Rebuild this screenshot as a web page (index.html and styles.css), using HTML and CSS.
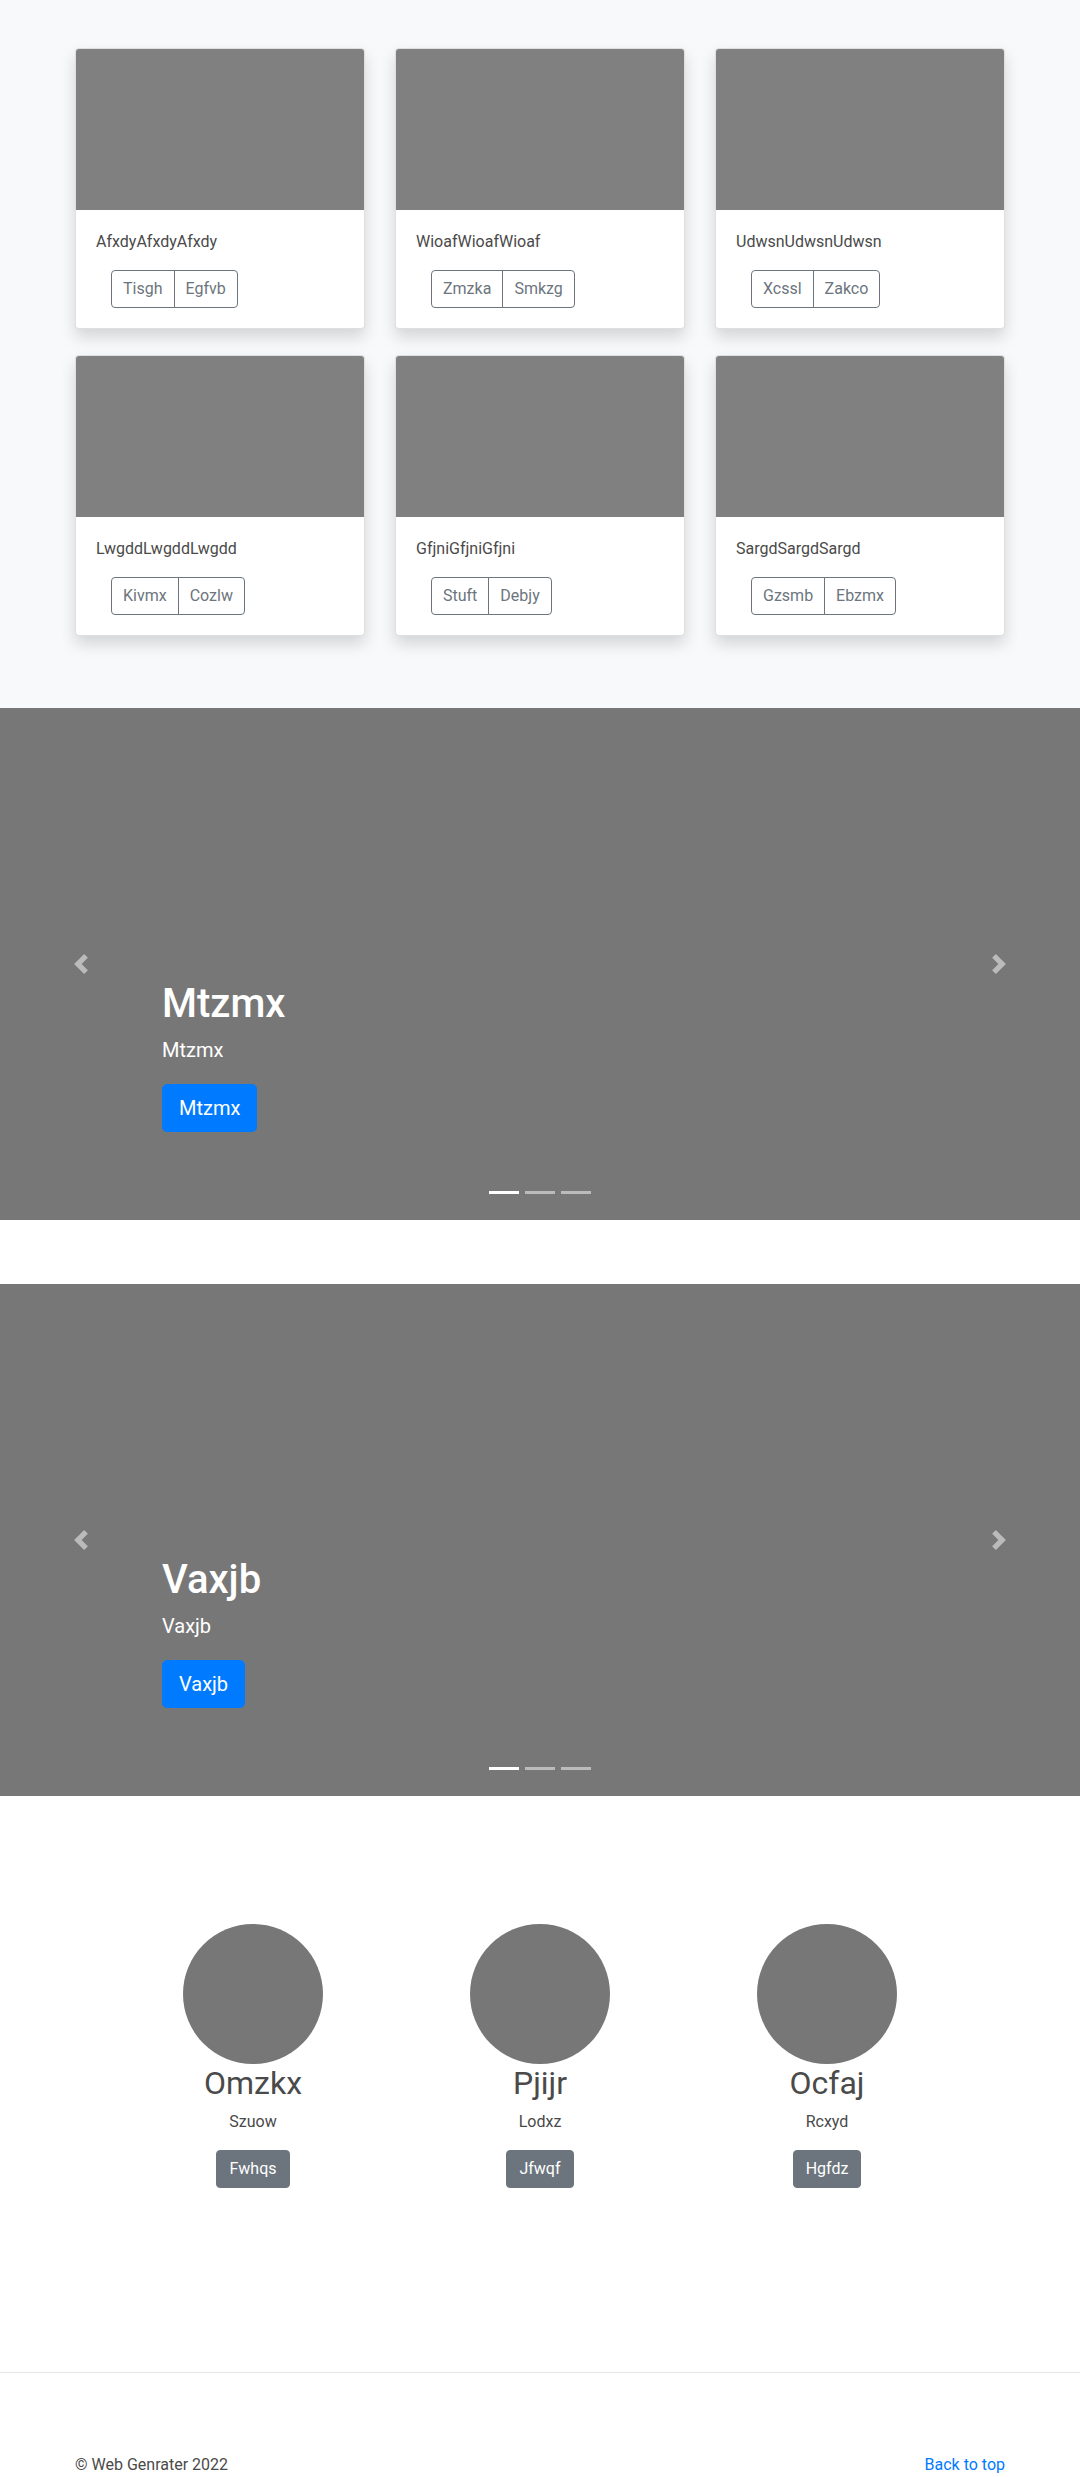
FILE: index.html
```html
<!DOCTYPE html>
<html lang="en">
<head>
<meta charset="utf-8">
<title>Album</title>
<link rel="stylesheet" href="styles.css">
</head>
<body>
<main>
  <section class="album">
    <div class="container">
      <div class="card-grid">
        <div class="card"><div class="card-img"></div><div class="card-body"><p class="card-text">AfxdyAfxdyAfxdy</p><div class="btn-group"><button class="btn btn-outline">Tisgh</button><button class="btn btn-outline">Egfvb</button></div></div></div>
        <div class="card"><div class="card-img"></div><div class="card-body"><p class="card-text">WioafWioafWioaf</p><div class="btn-group"><button class="btn btn-outline">Zmzka</button><button class="btn btn-outline">Smkzg</button></div></div></div>
        <div class="card"><div class="card-img"></div><div class="card-body"><p class="card-text">UdwsnUdwsnUdwsn</p><div class="btn-group"><button class="btn btn-outline">Xcssl</button><button class="btn btn-outline">Zakco</button></div></div></div>
        <div class="card"><div class="card-img"></div><div class="card-body"><p class="card-text">LwgddLwgddLwgdd</p><div class="btn-group"><button class="btn btn-outline">Kivmx</button><button class="btn btn-outline">Cozlw</button></div></div></div>
        <div class="card"><div class="card-img"></div><div class="card-body"><p class="card-text">GfjniGfjniGfjni</p><div class="btn-group"><button class="btn btn-outline">Stuft</button><button class="btn btn-outline">Debjy</button></div></div></div>
        <div class="card"><div class="card-img"></div><div class="card-body"><p class="card-text">SargdSargdSargd</p><div class="btn-group"><button class="btn btn-outline">Gzsmb</button><button class="btn btn-outline">Ebzmx</button></div></div></div>
      </div>
    </div>
  </section>

  <div class="carousel">
    <div class="caption">
      <h1>Mtzmx</h1>
      <p class="lead">Mtzmx</p>
      <p class="cta"><a class="btn btn-lg btn-primary" href="#">Mtzmx</a></p>
    </div>
    <a class="control control-prev" href="#"><svg viewBox="0 0 8 8" width="20" height="20"><path fill="#fff" d="M5.25 0l-4 4 4 4 1.5-1.5L4.250 4l2.5-2.5L5.25 0z"/></svg></a>
    <a class="control control-next" href="#"><svg viewBox="0 0 8 8" width="20" height="20"><path fill="#fff" d="M2.75 0l-1.5 1.5L3.75 4l-2.5 2.5L2.75 8l4-4-4-4z"/></svg></a>
    <ol class="indicators"><li class="active"></li><li></li><li></li></ol>
  </div>

  <div class="carousel">
    <div class="caption">
      <h1>Vaxjb</h1>
      <p class="lead">Vaxjb</p>
      <p class="cta"><a class="btn btn-lg btn-primary" href="#">Vaxjb</a></p>
    </div>
    <a class="control control-prev" href="#"><svg viewBox="0 0 8 8" width="20" height="20"><path fill="#fff" d="M5.25 0l-4 4 4 4 1.5-1.5L4.25 4l2.5-2.5L5.25 0z"/></svg></a>
    <a class="control control-next" href="#"><svg viewBox="0 0 8 8" width="20" height="20"><path fill="#fff" d="M2.75 0l-1.5 1.5L3.75 4l-2.5 2.5L2.75 8l4-4-4-4z"/></svg></a>
    <ol class="indicators"><li class="active"></li><li></li><li></li></ol>
  </div>

  <section class="marketing">
    <div class="marketing-row">
      <div class="feature"><div class="avatar"></div><h2>Omzkx</h2><p>Szuow</p><p><a class="btn btn-secondary" href="#">Fwhqs</a></p></div>
      <div class="feature"><div class="avatar"></div><h2>Pjijr</h2><p>Lodxz</p><p><a class="btn btn-secondary" href="#">Jfwqf</a></p></div>
      <div class="feature"><div class="avatar"></div><h2>Ocfaj</h2><p>Rcxyd</p><p><a class="btn btn-secondary" href="#">Hgfdz</a></p></div>
    </div>
  </section>

  <hr class="divider">

  <footer class="footer">
    <p>&copy; Web Genrater 2022</p>
    <p><a href="#">Back to top</a></p>
  </footer>
</main>
</body>
</html>
```

FILE: styles.css
```css
* { box-sizing: border-box; }
html, body { margin: 0; padding: 0; }
body {
  font-family: "Segoe UI", Roboto, "Helvetica Neue", Arial, sans-serif;
  font-size: 16px;
  line-height: 1.5;
  color: #4a4a4a;
  background: #fff;
}
p { margin: 0 0 16px; }
a { color: #007bff; text-decoration: none; }

.album {
  background: #f8f9fa;
  padding: 48px 0 72px;
}
.container {
  width: 960px;
  margin: 0 auto;
  padding: 0 15px;
}
.card-grid {
  display: grid;
  grid-template-columns: repeat(3, 1fr);
  column-gap: 30px;
  row-gap: 26px;
}
.card {
  background: #fff;
  border: 1px solid rgba(0,0,0,.125);
  border-radius: 4px;
  box-shadow: 0 8px 16px rgba(0,0,0,.15);
  overflow: hidden;
}
.card-img {
  height: 161px;
  background: #808080;
}
.card-body { padding: 20px; }
.card-text { margin: 0 0 16px; }
.btn-group {
  display: inline-flex;
  margin-left: 15px;
}
.btn {
  display: inline-block;
  font-family: inherit;
  font-size: 16px;
  line-height: 24px;
  padding: 6px 12px;
  border: 1px solid transparent;
  border-radius: 4px;
  cursor: pointer;
  text-align: center;
}
.btn-outline {
  background: transparent;
  color: #6c757d;
  border-color: #6c757d;
  padding: 6px 11px;
}
.btn-group .btn:first-child { border-top-right-radius: 0; border-bottom-right-radius: 0; }
.btn-group .btn + .btn { margin-left: -1px; border-top-left-radius: 0; border-bottom-left-radius: 0; }

.carousel {
  position: relative;
  height: 512px;
  background: #777;
  display: flex;
  flex-direction: column;
  justify-content: flex-end;
  padding: 0 15% 48px;
  margin-bottom: 64px;
  color: #fff;
}
.caption {
  padding: 20px 0;
  position: relative;
  z-index: 2;
}
.caption h1 {
  font-size: 40px;
  font-weight: 500;
  line-height: 1.2;
  margin: 0 0 8px;
}
.caption .lead {
  font-size: 20px;
  line-height: 1.4;
  margin: 0 0 20px;
}
.caption .cta { margin: 0 0 20px; line-height: 0; }
.btn-lg {
  font-size: 20px;
  line-height: 30px;
  padding: 8px 16px;
  border-radius: 4.8px;
}
.btn-primary { background: #007bff; border-color: #007bff; color: #fff; }
.btn-secondary { background: #6c757d; border-color: #6c757d; color: #fff; }

.control {
  position: absolute;
  top: 0;
  bottom: 0;
  width: 15%;
  display: flex;
  align-items: center;
  justify-content: center;
  opacity: .5;
}
.control svg { display: block; }
.control-prev { left: 0; }
.control-next { right: 0; }
.indicators {
  position: absolute;
  left: 15%;
  right: 15%;
  bottom: 26px;
  margin: 0;
  padding: 0;
  list-style: none;
  display: flex;
  justify-content: center;
  gap: 6px;
}
.indicators li {
  width: 30px;
  height: 3px;
  background: #fff;
  opacity: .5;
}
.indicators li.active { opacity: 1; }

.marketing {
  padding: 64px 0 0;
}
.marketing-row {
  width: 861px;
  margin: 0 auto;
  display: grid;
  grid-template-columns: repeat(3, 1fr);
}
.feature { text-align: center; }
.avatar {
  width: 140px;
  height: 140px;
  border-radius: 50%;
  background: #777;
  margin: 0 auto;
}
.feature h2 {
  font-size: 32px;
  font-weight: 400;
  line-height: 1.2;
  margin: 0 0 8px;
}
.feature p { margin: 0 0 16px; }

.divider {
  border: 0;
  border-top: 1px solid rgba(0,0,0,.1);
  margin: 168px 0 80px;
}
.footer {
  width: 960px;
  margin: 0 auto;
  padding: 0 15px;
  display: flex;
  justify-content: space-between;
}
```
